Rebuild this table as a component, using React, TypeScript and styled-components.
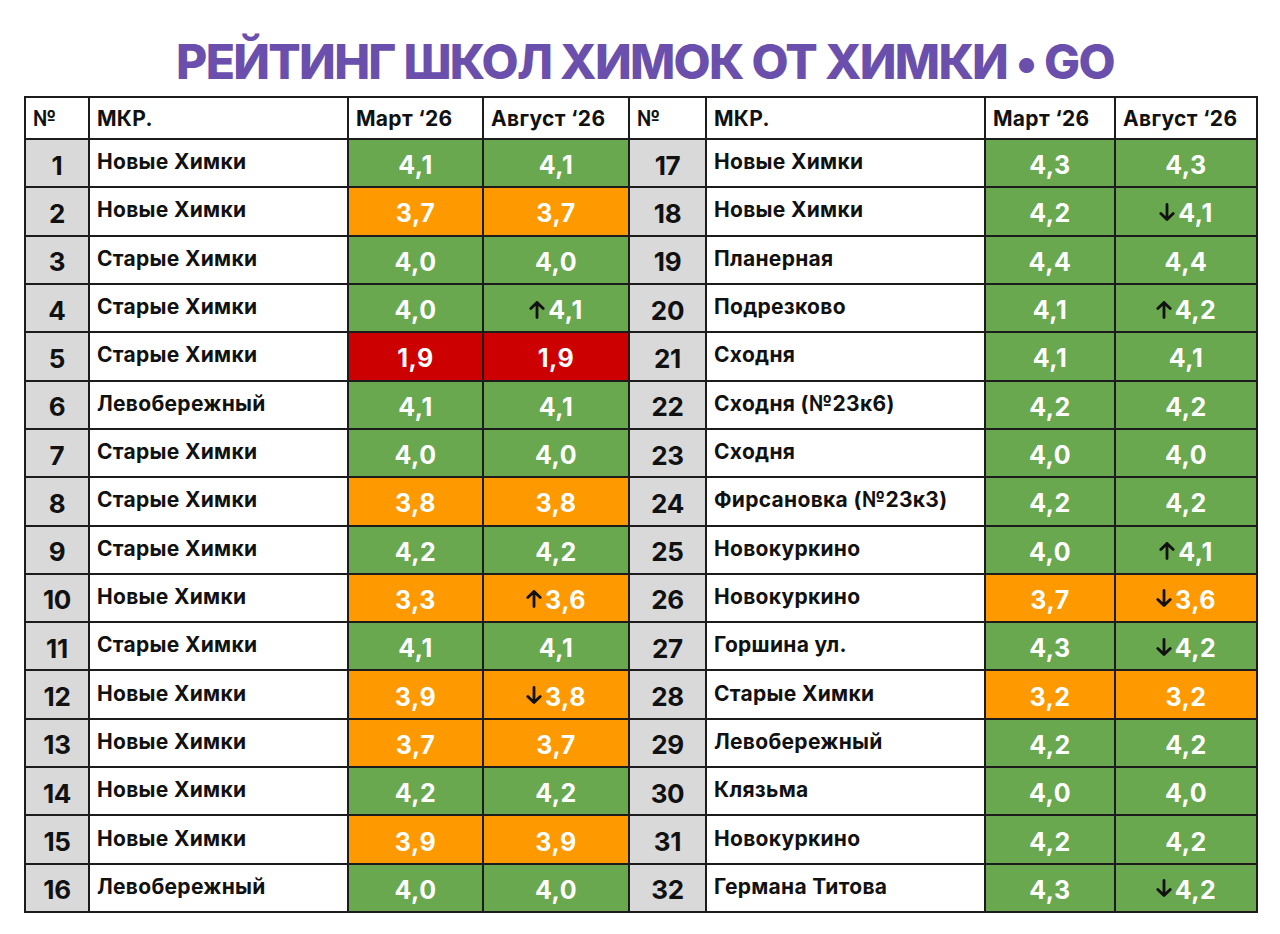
import React from 'react'
import styled, { createGlobalStyle } from 'styled-components'

const GlobalStyle = createGlobalStyle`
  html, body {
    margin: 0;
    padding: 0;
    background: #fff;
  }
  body {
    font-family: 'Inter', 'Liberation Sans', sans-serif;
  }
`

type Tone = 'green' | 'orange' | 'red'
type Trend = 'up' | 'down' | undefined

interface School {
  n: number
  area: string
  march: string
  august: string
  tone: Tone
  trend?: Trend
}

const tones: Record<Tone, string> = {
  green: '#6aa84f',
  orange: '#ff9900',
  red: '#cc0000',
}

const left: School[] = [
  { n: 1, area: 'Новые Химки', march: '4,1', august: '4,1', tone: 'green' },
  { n: 2, area: 'Новые Химки', march: '3,7', august: '3,7', tone: 'orange' },
  { n: 3, area: 'Старые Химки', march: '4,0', august: '4,0', tone: 'green' },
  { n: 4, area: 'Старые Химки', march: '4,0', august: '4,1', tone: 'green', trend: 'up' },
  { n: 5, area: 'Старые Химки', march: '1,9', august: '1,9', tone: 'red' },
  { n: 6, area: 'Левобережный', march: '4,1', august: '4,1', tone: 'green' },
  { n: 7, area: 'Старые Химки', march: '4,0', august: '4,0', tone: 'green' },
  { n: 8, area: 'Старые Химки', march: '3,8', august: '3,8', tone: 'orange' },
  { n: 9, area: 'Старые Химки', march: '4,2', august: '4,2', tone: 'green' },
  { n: 10, area: 'Новые Химки', march: '3,3', august: '3,6', tone: 'orange', trend: 'up' },
  { n: 11, area: 'Старые Химки', march: '4,1', august: '4,1', tone: 'green' },
  { n: 12, area: 'Новые Химки', march: '3,9', august: '3,8', tone: 'orange', trend: 'down' },
  { n: 13, area: 'Новые Химки', march: '3,7', august: '3,7', tone: 'orange' },
  { n: 14, area: 'Новые Химки', march: '4,2', august: '4,2', tone: 'green' },
  { n: 15, area: 'Новые Химки', march: '3,9', august: '3,9', tone: 'orange' },
  { n: 16, area: 'Левобережный', march: '4,0', august: '4,0', tone: 'green' },
]

const right: School[] = [
  { n: 17, area: 'Новые Химки', march: '4,3', august: '4,3', tone: 'green' },
  { n: 18, area: 'Новые Химки', march: '4,2', august: '4,1', tone: 'green', trend: 'down' },
  { n: 19, area: 'Планерная', march: '4,4', august: '4,4', tone: 'green' },
  { n: 20, area: 'Подрезково', march: '4,1', august: '4,2', tone: 'green', trend: 'up' },
  { n: 21, area: 'Сходня', march: '4,1', august: '4,1', tone: 'green' },
  { n: 22, area: 'Сходня (№23к6)', march: '4,2', august: '4,2', tone: 'green' },
  { n: 23, area: 'Сходня', march: '4,0', august: '4,0', tone: 'green' },
  { n: 24, area: 'Фирсановка (№23к3)', march: '4,2', august: '4,2', tone: 'green' },
  { n: 25, area: 'Новокуркино', march: '4,0', august: '4,1', tone: 'green', trend: 'up' },
  { n: 26, area: 'Новокуркино', march: '3,7', august: '3,6', tone: 'orange', trend: 'down' },
  { n: 27, area: 'Горшина ул.', march: '4,3', august: '4,2', tone: 'green', trend: 'down' },
  { n: 28, area: 'Старые Химки', march: '3,2', august: '3,2', tone: 'orange' },
  { n: 29, area: 'Левобережный', march: '4,2', august: '4,2', tone: 'green' },
  { n: 30, area: 'Клязьма', march: '4,0', august: '4,0', tone: 'green' },
  { n: 31, area: 'Новокуркино', march: '4,2', august: '4,2', tone: 'green' },
  { n: 32, area: 'Германа Титова', march: '4,3', august: '4,2', tone: 'green', trend: 'down' },
]

const Page = styled.div`
  width: 1280px;
  height: 934px;
  box-sizing: border-box;
  padding: 37px 22px 0 24px;
  display: flex;
  flex-direction: column;
`

const Title = styled.h1`
  margin: 0 0 10px;
  padding-left: 8px;
  text-align: center;
  font-family: 'Inter', 'Liberation Sans', sans-serif;
  font-weight: 800;
  font-size: 48px;
  line-height: 49px;
  color: #6a4fad;
  letter-spacing: -1.7px;
`

const Table = styled.div`
  display: grid;
  grid-template-columns: 62px 257px 133px 144px 75px 277px 128px 1fr;
  grid-template-rows: 40px repeat(16, 1fr);
  gap: 2px;
  padding: 2px;
  background: #1c1c1c;
  height: 817px;
  box-sizing: border-box;
`

const HeadCell = styled.div`
  background: #fff;
  display: flex;
  align-items: center;
  padding: 0 7px;
  font-weight: 700;
  font-size: 21px;
  letter-spacing: 0.3px;
  color: #111;
`

const NumCell = styled.div`
  background: #d9d9d9;
  display: flex;
  align-items: center;
  justify-content: center;
  padding-top: 4px;
  font-weight: 700;
  font-size: 26px;
  color: #111;
  letter-spacing: -0.3px;
`

const NameCell = styled.div`
  background: #fff;
  display: flex;
  align-items: center;
  padding: 0 7px 3px;
  font-weight: 700;
  font-size: 21px;
  letter-spacing: 0.3px;
  color: #111;
  white-space: nowrap;
`

const ValueCell = styled.div<{ $tone: Tone }>`
  background: ${p => tones[p.$tone]};
  display: flex;
  align-items: center;
  justify-content: center;
  gap: 3px;
  padding-top: 4px;
  font-weight: 700;
  font-size: 25px;
  color: #fff;
  letter-spacing: 0.5px;
`

const ArrowIcon = styled.svg`
  width: 16px;
  height: 19px;
  margin-top: -2px;
  flex-shrink: 0;
`

const Arrow: React.FC<{ dir: 'up' | 'down' }> = ({ dir }) => (
  <ArrowIcon viewBox="0 0 16 19" style={dir === 'down' ? { transform: 'rotate(180deg)' } : undefined}>
    <path d="M8 17.5V2.5M1.8 8.6L8 2.4l6.2 6.2" fill="none" stroke="#111" strokeWidth="2.8" strokeLinecap="round" strokeLinejoin="round" />
  </ArrowIcon>
)

const Value: React.FC<{ value: string; trend?: Trend; tone: Tone }> = ({ value, trend, tone }) => (
  <ValueCell $tone={tone}>
    {trend && <Arrow dir={trend} />}
    {value}
  </ValueCell>
)

const headers = ['№', 'МКР.', 'Март ‘26', 'Август ‘26']

export default function App() {
  return (
    <>
      <GlobalStyle />
      <Page>
        <Title>РЕЙТИНГ ШКОЛ ХИМОК ОТ ХИМКИ • GO</Title>
        <Table>
          {[...headers, ...headers].map((h, i) => (
            <HeadCell key={'h' + i}>{h}</HeadCell>
          ))}
          {left.map((l, i) => {
            const r = right[i]
            return (
              <React.Fragment key={l.n}>
                <NumCell>{l.n}</NumCell>
                <NameCell>{l.area}</NameCell>
                <Value value={l.march} tone={l.tone} />
                <Value value={l.august} tone={l.tone} trend={l.trend} />
                <NumCell>{r.n}</NumCell>
                <NameCell>{r.area}</NameCell>
                <Value value={r.march} tone={r.tone} />
                <Value value={r.august} tone={r.tone} trend={r.trend} />
              </React.Fragment>
            )
          })}
        </Table>
      </Page>
    </>
  )
}
